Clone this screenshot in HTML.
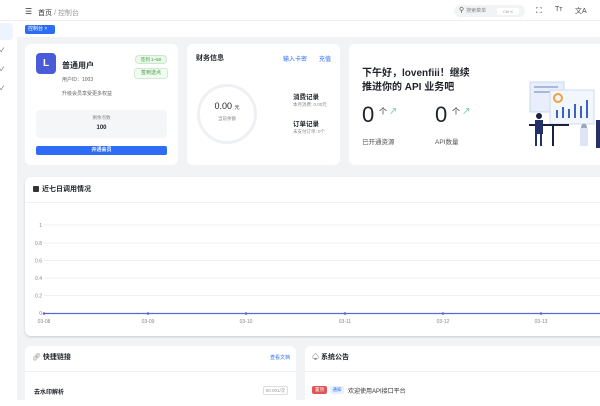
<!DOCTYPE html><html><head><meta charset="utf-8"><style>
*{box-sizing:border-box;margin:0;padding:0}
body{width:600px;height:400px;overflow:hidden;background:#fff;font-family:"Liberation Sans","Noto Sans CJK SC",sans-serif;position:relative;color:#1f2329}
.a{position:absolute}
.card{position:absolute;background:#fff;border-radius:6px}
.t{position:absolute;white-space:nowrap}
</style></head><body>
<div class="a" style="left:0;top:23px;width:13px;height:17px;background:#eef4ff;border-radius:0 4px 4px 0"></div>
<div class="t" style="left:0;top:45px;font-size:6px;color:#555">✓</div>
<div class="t" style="left:0;top:64px;font-size:6px;color:#555">✓</div>
<div class="t" style="left:0;top:83px;font-size:6px;color:#555">✓</div>
<div class="a" style="left:17px;top:37px;width:583px;height:363px;background:#f2f3f5"></div>
<div class="t" style="left:25px;top:7px;font-size:8px;color:#333">☰</div>
<div class="t" style="left:38px;top:8px;font-size:7px;color:#333">首页 <span style="color:#999">/ 控制台</span></div>
<div class="a" style="left:454px;top:5px;width:71px;height:12px;background:#f2f3f5;border-radius:6px"></div>
<div class="t" style="left:459px;top:6px;font-size:7px;color:#555">⚲ <span style="font-size:5px;color:#888">搜索菜单</span></div>
<div class="a" style="left:497px;top:8px;width:22px;height:7px;background:#fff;border-radius:2px;font-size:4px;color:#999;text-align:center;line-height:7px">Ctrl K</div>
<div class="t" style="left:536px;top:6px;font-size:8px;color:#444">⛶</div>
<div class="t" style="left:555px;top:6px;font-size:7px;color:#444">Tт</div>
<div class="t" style="left:575px;top:6px;font-size:7px;color:#444">文A</div>
<div class="a" style="left:0;top:20px;width:600px;height:1px;background:#eee"></div>
<div class="a" style="left:25px;top:25px;width:30px;height:9px;background:#2d6df6;border-radius:2px;color:#fff;font-size:5px;line-height:9px;padding-left:3px">控制台 ×</div>

<div class="card" style="left:25px;top:44px;width:153px;height:121px"></div>
<div class="a" style="left:36px;top:53px;width:20px;height:21px;background:#4a5bd8;border-radius:4px;color:#fff;font-weight:bold;font-size:10px;text-align:center;line-height:21px">L</div>
<div class="t" style="left:62px;top:60px;font-size:8px;font-weight:bold">普通用户</div>
<div class="t" style="left:62px;top:76px;font-size:5px;color:#666">用户ID：1003</div>
<div class="t" style="left:62px;top:90px;font-size:5px;color:#666">升级会员享受更多权益</div>
<div class="a" style="left:135px;top:55px;width:32px;height:9px;background:#eaf8ea;border:1px solid #cce8cc;border-radius:4px;font-size:4.5px;color:#3a9a3a;text-align:center;line-height:7px">签到 1~50</div>
<div class="a" style="left:134px;top:68px;width:34px;height:11px;background:#f2fbf2;border:1px solid #cfeccf;border-radius:3px;font-size:5px;color:#3a9a3a;text-align:center;line-height:9px">签到送点</div>
<div class="a" style="left:36px;top:110px;width:131px;height:28px;background:#f5f6f8;border-radius:4px"></div>
<div class="t" style="left:36px;top:115px;width:131px;text-align:center;font-size:4.5px;color:#888">剩余点数</div>
<div class="t" style="left:36px;top:125px;width:131px;text-align:center;font-size:6px;font-weight:bold">100</div>
<div class="a" style="left:36px;top:146px;width:131px;height:9px;background:#2d6df6;border-radius:2px;color:#fff;font-size:5px;font-weight:bold;text-align:center;line-height:9px">开通会员</div>

<div class="card" style="left:187px;top:44px;width:153px;height:121px"></div>
<div class="t" style="left:196px;top:53px;font-size:7px;font-weight:bold">财务信息</div>
<div class="t" style="left:283px;top:54px;font-size:6px;color:#2d6df6">输入卡密</div>
<div class="t" style="left:319px;top:54px;font-size:6px;color:#2d6df6">充值</div>
<div class="a" style="left:197px;top:84px;width:60px;height:60px;border:3px solid #eef0f4;border-radius:50%"></div>
<div class="t" style="left:197px;top:101px;width:60px;text-align:center;font-size:9px">0.00 <span style="font-size:5px">元</span></div>
<div class="t" style="left:197px;top:116px;width:60px;text-align:center;font-size:4.5px;color:#888">当前余额</div>
<div class="t" style="left:293px;top:91px;font-size:6.5px;font-weight:bold">消费记录</div>
<div class="t" style="left:293px;top:102px;font-size:4.5px;color:#888">本月消费: 0.00元</div>
<div class="t" style="left:293px;top:118px;font-size:6.5px;font-weight:bold">订单记录</div>
<div class="t" style="left:293px;top:129px;font-size:4.5px;color:#888">未支付订单: 0个</div>

<div class="card" style="left:349px;top:44px;width:260px;height:121px"></div>
<div class="t" style="left:362px;top:67px;font-size:10px;font-weight:bold;line-height:14px">下午好，lovenfiii！继续<br>推进你的 API 业务吧</div>
<div class="t" style="left:362px;top:102px;font-size:22px">0</div>
<div class="t" style="left:379px;top:106px;font-size:8px">个 <span style="color:#3cb878">↗</span></div>
<div class="t" style="left:362px;top:136px;font-size:6.5px;color:#555">已开通资源</div>
<div class="t" style="left:435px;top:102px;font-size:22px">0</div>
<div class="t" style="left:452px;top:106px;font-size:8px">个 <span style="color:#3cb878">↗</span></div>
<div class="t" style="left:435px;top:136px;font-size:6.5px;color:#555">API数量</div>
<svg class="a" style="left:520px;top:80px" width="80" height="70">
<rect x="10" y="2" width="34" height="30" fill="#e8eefa" stroke="#c8d6f0"/>
<rect x="14" y="6" width="24" height="2" fill="#a8b8dc"/><rect x="14" y="11" width="16" height="2" fill="#a8b8dc"/>
<rect x="30" y="10" width="44" height="34" fill="#f2f6fd" stroke="#d0dcf2"/>
<circle cx="38" cy="18" r="4" fill="none" stroke="#f0a040" stroke-width="2"/>
<rect x="36" y="30" width="2" height="8" fill="#3b62c4"/><rect x="42" y="27" width="2" height="11" fill="#3b62c4"/><rect x="48" y="29" width="2" height="9" fill="#3b62c4"/><rect x="54" y="24" width="2" height="14" fill="#3b62c4"/><rect x="60" y="26" width="2" height="12" fill="#3b62c4"/><rect x="66" y="20" width="2" height="18" fill="#3b62c4"/>
<rect x="9" y="44" width="40" height="2" fill="#1a2040"/><rect x="32" y="46" width="2" height="20" fill="#1a2040"/>
<circle cx="19" cy="36" r="3" fill="#1a2040"/><path d="M15 40h8v14h-8z" fill="#23306a"/><path d="M16 54v12M21 54v12" stroke="#23306a" stroke-width="2"/>
<path d="M76 40h4v28h-4z" fill="#23306a"/><rect x="60" y="48" width="8" height="18" fill="#dde6f2"/><path d="M61 48c0-6 6-6 6 0z" fill="#9ab"/>
</svg>

<div class="card" style="left:25px;top:177px;width:590px;height:159px;box-shadow:0 1px 2px #ccc"></div>
<div class="a" style="left:33px;top:186px;width:6px;height:6px;background:#333;border-radius:1px"></div>
<div class="t" style="left:42px;top:184px;font-size:7px;font-weight:bold">近七日调用情况</div>
<div class="a" style="left:25px;top:202px;width:575px;height:1px;background:#f0f0f0"></div>
<svg class="a" style="left:25px;top:215px" width="575" height="110" font-family="Liberation Sans" font-size="5" fill="#888">
<g stroke="#f0f0f0"><line x1="19" y1="10" x2="575" y2="10"/><line x1="19" y1="28" x2="575" y2="28"/><line x1="19" y1="45.5" x2="575" y2="45.5"/><line x1="19" y1="63" x2="575" y2="63"/><line x1="19" y1="80.5" x2="575" y2="80.5"/></g>
<text x="17" y="12" text-anchor="end">1</text><text x="17" y="30" text-anchor="end">0.8</text><text x="17" y="47.5" text-anchor="end">0.6</text><text x="17" y="65" text-anchor="end">0.4</text><text x="17" y="82.5" text-anchor="end">0.2</text><text x="17" y="100" text-anchor="end">0</text>
<line x1="19" y1="98.5" x2="575" y2="98.5" stroke="#5a6ad0" stroke-width="1.2"/>
<g fill="#5a6ad0"><circle cx="19" cy="98.5" r="1.3"/><circle cx="123" cy="98.5" r="1.3"/><circle cx="221" cy="98.5" r="1.3"/><circle cx="320" cy="98.5" r="1.3"/><circle cx="418" cy="98.5" r="1.3"/><circle cx="516" cy="98.5" r="1.3"/></g>
<text x="19" y="108" text-anchor="middle">03-08</text><text x="123" y="108" text-anchor="middle">03-09</text><text x="221" y="108" text-anchor="middle">03-10</text><text x="320" y="108" text-anchor="middle">03-11</text><text x="418" y="108" text-anchor="middle">03-12</text><text x="516" y="108" text-anchor="middle">03-13</text>
</svg>

<div class="card" style="left:25px;top:346px;width:271px;height:60px"></div>
<div class="t" style="left:32px;top:352px;font-size:7px;font-weight:bold"><span style="font-weight:normal;color:#888">🔗︎</span> 快捷链接</div>
<div class="t" style="left:270px;top:354px;font-size:5px;color:#2d6df6">查看文档</div>
<div class="a" style="left:25px;top:371px;width:271px;height:1px;background:#f0f0f0"></div>
<div class="t" style="left:34px;top:387px;font-size:6px;font-weight:bold">去水印解析</div>
<div class="a" style="left:263px;top:386px;width:25px;height:9px;border:1px solid #ddd;border-radius:2px;font-size:4.5px;color:#999;text-align:center;line-height:7px">¥0.001/次</div>
<div class="card" style="left:305px;top:346px;width:300px;height:60px"></div>
<div class="t" style="left:312px;top:352px;font-size:7px;font-weight:bold"><span style="font-weight:normal">♤</span> 系统公告</div>
<div class="a" style="left:305px;top:371px;width:295px;height:1px;background:#f0f0f0"></div>
<div class="a" style="left:312px;top:386px;width:15px;height:8px;background:#e05555;border-radius:2px;font-size:4.5px;color:#fff;text-align:center;line-height:8px">置顶</div>
<div class="a" style="left:330px;top:386px;width:14px;height:8px;background:#e8f0ff;border-radius:2px;font-size:4.5px;color:#2d6df6;text-align:center;line-height:8px">通知</div>
<div class="t" style="left:348px;top:386px;font-size:6px;color:#333">欢迎使用API接口平台</div>
</body></html>
